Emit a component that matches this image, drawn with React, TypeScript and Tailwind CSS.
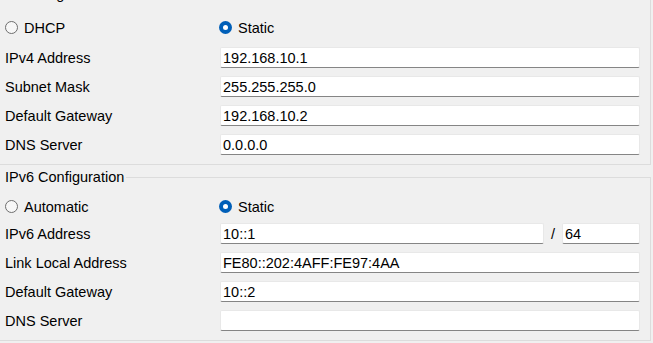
import React from "react";

function Radio({ checked, label }: { checked?: boolean; label: string }) {
  return (
    <div className="flex items-center gap-[6px]">
      {checked ? (
        <span className="w-[13px] h-[13px] rounded-full bg-[#005fb8] flex items-center justify-center">
          <span className="w-[5px] h-[5px] rounded-full bg-white" />
        </span>
      ) : (
        <span className="w-[13px] h-[13px] rounded-full border border-[#6e6e6e] bg-[#f7f7f7]" />
      )}
      <span>{label}</span>
    </div>
  );
}

function Field({ value, w = "w-[420px]" }: { value: string; w?: string }) {
  return (
    <div
      className={`${w} h-[21px] bg-white rounded-[2px] border border-[#e8e8e8] border-b-[#858585] flex items-center pl-[2px] text-black`}
    >
      {value}
    </div>
  );
}

function Row({ label, value }: { label: string; value: string }) {
  return (
    <div className="flex items-center h-[21px]">
      <div className="w-[220px] pl-[5px]">{label}</div>
      <Field value={value} />
    </div>
  );
}

export default function App() {
  return (
    <div className="w-[653px] h-[343px] bg-[#f0f0f0] overflow-hidden text-[14.5px] leading-[16px] text-black font-['Liberation_Sans',Arial,sans-serif]">
      {/* IPv4 group */}
      <div className="w-[651px] h-[165px] border-r border-b border-[#dcdcdc] flex flex-col">
        <div className="h-[16px] -mt-[14px] pl-[5px] leading-[16px]">IP Configuration</div>
        <div className="mt-[15px] h-[21px] flex items-center">
          <div className="w-[220px] pl-[5px]">
            <Radio label="DHCP" />
          </div>
          <div className="-ml-[1px]">
            <Radio checked label="Static" />
          </div>
        </div>
        <div className="mt-[9px] flex flex-col gap-[8px]">
          <Row label="IPv4 Address" value="192.168.10.1" />
          <Row label="Subnet Mask" value="255.255.255.0" />
          <Row label="Default Gateway" value="192.168.10.2" />
          <Row label="DNS Server" value="0.0.0.0" />
        </div>
      </div>

      {/* IPv6 group */}
      <div className="mt-[12px] w-[651px] h-[164px] border-t border-r border-b border-[#dcdcdc] relative flex flex-col">
        <div className="absolute left-0 -top-[9px] pl-[5px] pr-[2px] bg-[#f0f0f0] leading-[16px]">
          IPv6 Configuration
        </div>
        <div className="mt-[18px] h-[21px] flex items-center">
          <div className="w-[220px] pl-[5px]">
            <Radio label="Automatic" />
          </div>
          <div className="-ml-[1px]">
            <Radio checked label="Static" />
          </div>
        </div>
        <div className="mt-[6px] flex flex-col gap-[8px]">
          <div className="flex items-center h-[21px]">
            <div className="w-[220px] pl-[5px]">IPv6 Address</div>
            <Field value="10::1" w="w-[324px]" />
            <div className="w-[18px] text-center">/</div>
            <Field value="64" w="w-[78px]" />
          </div>
          <Row label="Link Local Address" value="FE80::202:4AFF:FE97:4AA" />
          <Row label="Default Gateway" value="10::2" />
          <Row label="DNS Server" value="" />
        </div>
      </div>
    </div>
  );
}
